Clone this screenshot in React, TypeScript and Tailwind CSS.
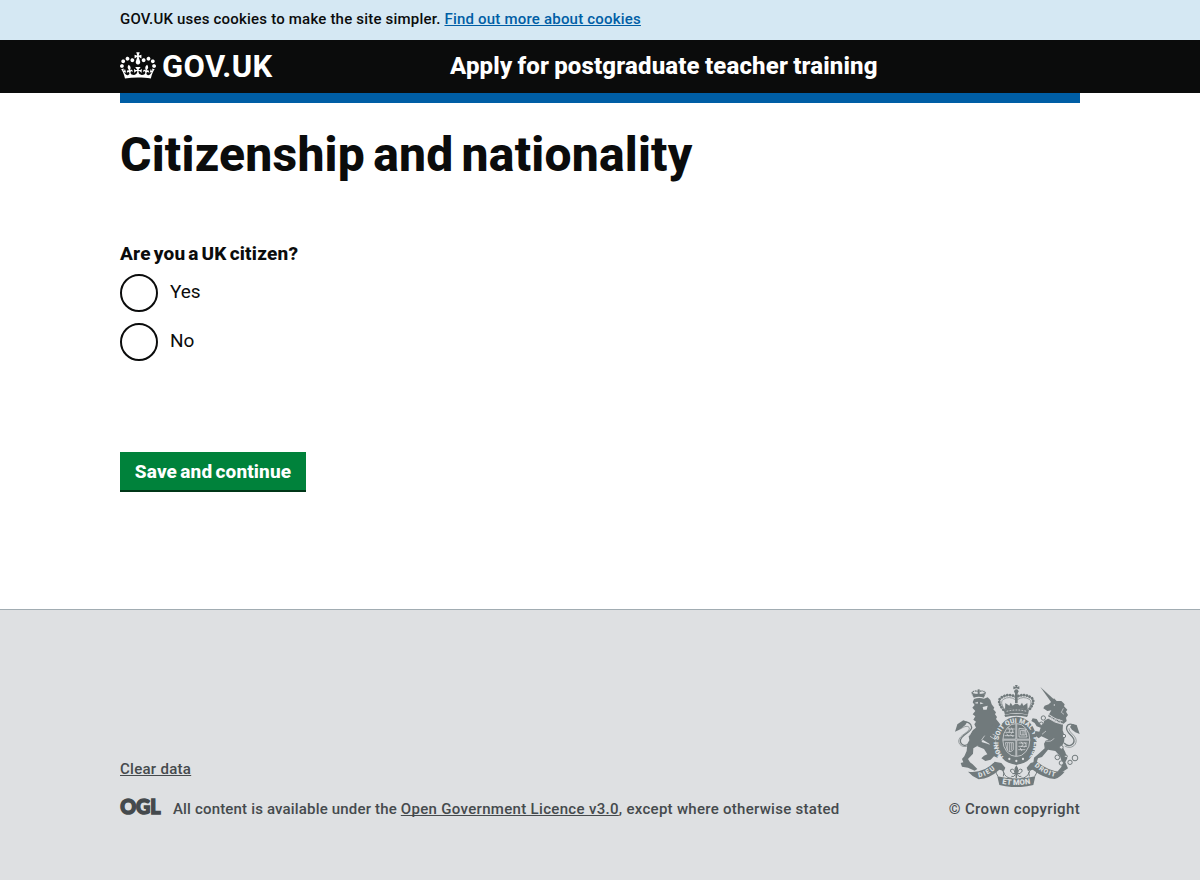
import React from 'react';

function Crown() {
  return (
    <svg viewBox="0 0 132 97" width="36" height="27" fill="currentColor" fillRule="evenodd" aria-hidden="true" className="block">
      <path d="M25 30.2c3.5 1.5 7.7-.2 9.1-3.7 1.5-3.6-.2-7.8-3.9-9.2-3.6-1.4-7.6.3-9.1 3.9-1.4 3.5.3 7.5 3.9 9zM9 39.5c3.6 1.5 7.8-.2 9.2-3.7 1.5-3.6-.2-7.8-3.9-9.1-3.6-1.5-7.6.2-9.1 3.8-1.4 3.5.3 7.5 3.8 9zM4.4 57.2c3.5 1.5 7.7-.2 9.1-3.8 1.5-3.6-.2-7.7-3.9-9.1-3.5-1.5-7.6.3-9.1 3.8-1.4 3.5.3 7.6 3.9 9.1zm38.3-21.4c3.5 1.5 7.7-.2 9.1-3.8 1.5-3.6-.2-7.7-3.9-9.1-3.6-1.5-7.6.3-9.1 3.8-1.3 3.6.4 7.7 3.9 9.1zm64.4-5.6c-3.6 1.5-7.8-.2-9.1-3.7-1.5-3.6.2-7.8 3.8-9.2 3.6-1.4 7.7.3 9.2 3.9 1.3 3.5-.4 7.5-3.9 9zm15.9 9.3c-3.6 1.5-7.7-.2-9.1-3.7-1.5-3.6.2-7.8 3.7-9.1 3.6-1.5 7.7.2 9.2 3.8 1.5 3.5-.3 7.5-3.8 9zm4.7 17.7c-3.6 1.5-7.8-.2-9.2-3.8-1.5-3.6.2-7.7 3.9-9.1 3.6-1.5 7.7.3 9.2 3.8 1.3 3.5-.4 7.6-3.9 9.1zM89.3 35.8c-3.6 1.5-7.8-.2-9.2-3.8-1.4-3.6.2-7.7 3.9-9.1 3.6-1.5 7.7.3 9.2 3.8 1.4 3.6-.3 7.7-3.9 9.1zM69.7 17.7l8.9 4.7V9.3l-8.9 2.8c-.2-.3-.5-.6-.9-.9L72.4 0H59.6l3.5 11.2c-.3.3-.6.5-.9.9l-8.8-2.8v13.1l8.8-4.7c.3.3.6.7.9.9l-5 15.4v.1c-.2.8-.4 1.6-.4 2.4 0 4.1 3.1 7.5 7 8.1h.2c.3 0 .7.1 1 .1.4 0 .7 0 1-.1h.2c4-.6 7.1-4.1 7.1-8.1 0-.8-.1-1.7-.4-2.4V34l-5.1-15.4c.4-.2.7-.6 1-.9zM66 92.8c16.9 0 32.8 1.1 47.1 3.2 4-16.9 8.9-26.7 14-33.5l-9.6-3.4c1 4.9 1.1 7.2 0 10.2-1.5-1.4-3-4.3-4.2-8.7L108.6 76c2.8-2 5-3.2 7.5-3.3-4.4 9.4-10 11.9-13.6 11.2-4.3-.8-6.3-4.6-5.6-7.9 1-4.7 5.7-5.9 8-.5 4.3-8.7-3-11.4-7.6-8.8 7.1-7.2 7.9-13.5 2.1-21.1-8 6.1-8.1 12.3-4.5 20.8-4.7-5.4-12.1-2.5-9.5 6.2 3.4-5.2 7.9-2 7.2 3.1-.6 4.3-6.4 7.8-13.5 7.2-10.3-.9-10.9-8-11.2-13.8 2.5-.5 7.1 1.8 11 7.3L80.2 60c-4.1 4.4-8 5.3-12.3 5.4 1.4-4.4 8-11.6 8-11.6H55.5s6.4 7.2 7.9 11.6c-4.2-.1-8-1-12.3-5.4l1.4 16.4c3.9-5.5 8.5-7.7 10.9-7.3-.3 5.8-.9 12.8-11.1 13.8-7.2.6-12.9-2.9-13.5-7.2-.7-5 3.8-8.3 7.1-3.1 2.7-8.7-4.6-11.6-9.4-6.2 3.7-8.5 3.6-14.7-4.6-20.8-5.8 7.6-5 13.9 2.2 21.1-4.7-2.6-11.9.1-7.7 8.8 2.3-5.5 7.1-4.2 8.1.5.7 3.3-1.3 7.1-5.7 7.9-3.5.7-9-1.8-13.5-11.2 2.5.1 4.7 1.3 7.5 3.3l-4.7-15.4c-1.2 4.4-2.7 7.2-4.3 8.7-1.1-3-.9-5.3 0-10.2l-9.5 3.4c5 6.9 9.9 16.7 14 33.5 14.8-2.1 30.8-3.2 47.7-3.2z" />
    </svg>
  );
}

function OglLogo() {
  return (
    <svg width="41" height="18" viewBox="0 0 41 18" aria-hidden="true" className="mr-3 -mt-px block overflow-visible">
      <text x="0.2" y="16.2" textLength="40.4" lengthAdjust="spacingAndGlyphs" fontFamily="Lato" fontWeight="900" fontSize="20.5" fill="#454a4d" stroke="#454a4d" strokeWidth="1.5">
        OGL
      </text>
    </svg>
  );
}

const INK = '#717a7c';
const PAPER = '#dee0e2';

function Crest() {
  return (
    <svg width="125" height="102" viewBox="45 30 375 306" aria-hidden="true" className="block">
      <defs>
        <path id="garter" d="M191 246 C169 222 170 178 194 157 C214 139 246 139 264 157 C287 178 287 224 266 248" />
        <path id="dieu" d="M116 307 Q144 303 170 278" />
        <path id="mon" d="M186 326 Q229 334 272 326" />
        <path id="droit" d="M283 273 Q312 300 350 306" />
      </defs>

      {/* lion */}
      <g fill={INK}>
        <path d="M101 68 L97 54 Q116 60 135 54 L132 68 Q116 63 101 68Z" />
        <path d="M113 43 H119 V58 H113Z" />
        <path d="M102 72 Q116 67 132 71 L143 67 L151 75 L155 88 L163 98 L160 103 L168 112 L165 118 L171 126 L168 132 L176 142 L184 152 L172 172 L166 206 L174 234 L166 240 L154 228 L148 206 L128 194 L121 208 L100 220 L99 236 L84 252 L90 262 L98 268 L112 282 L104 287 L84 278 L66 275 L62 264 L70 262 L66 252 L73 244 L80 228 L82 206 L88 196 L86 184 L98 166 L108 158 L103 148 L108 140 L100 134 L106 124 L98 118 L106 108 L97 98 L104 90 L98 82Z" />
        <path d="M142 206 L156 212 L156 226 L166 234 L178 240 L172 248 L162 244 L152 254 L136 258 L124 250 L132 242 L142 238 L132 222 L112 214 L122 200Z" />
        <path d="M180 164 L180 176 L166 178 L158 170 L150 156 L160 148Z" />
        <path d="M45 170 L52 148 L70 136 L82 140 L76 150 L66 158 L58 164Z" />
      </g>
      <path d="M100 62 Q92 50 102 49 Q110 46 115 51 M132 62 Q140 50 130 49 Q122 46 117 51" fill="none" stroke={INK} strokeWidth="4.5" strokeLinecap="round" strokeDasharray="0.1 5" />
      <path d="M70 144 C82 138 94 144 95 157 C96 172 60 180 61 198 C63 213 80 216 92 202" fill="none" stroke={INK} strokeWidth="4" />
      <path d="M61 162 C72 154 87 150 88 160 C89 172 57 180 56 198 C57 216 78 219 92 209" fill="none" stroke={INK} strokeWidth="2" />
      <g fill={PAPER}>
        <path d="M103 84 L114 80 L113 86 Z M120 82 L131 85 L121 88Z M128 96 L143 92 L140 104 L130 104Z" />
      </g>
      <path d="M158 178 L168 182 M150 184 L166 194 M124 196 L134 182 M100 160 L88 182" stroke={PAPER} strokeWidth="2.2" fill="none" />

      {/* royal crown */}
      <g fill={INK}>
        <circle cx="229" cy="49" r="6.5" />
        <path d="M225 30 H233 L231 36 L238 34 V43 L229 40 L220 43 V34 L227 36Z" />
        <path d="M191 104 Q228 92 267 104 L264 119 Q228 109 195 119Z" />
        <path d="M225 54 H233 V84 H225Z M196 84 L208 92 L212 83 L218 92 L226 86 L232 86 L240 92 L246 83 L250 92 L262 84 L263 104 Q228 94 195 104Z" />
        <path d="M193 120 Q229 112 264 120 L261 126 Q229 118 196 126Z" />
      </g>
      <path d="M190 104 Q168 76 185 67 Q206 54 228 66 Q252 54 272 67 Q289 76 268 104" fill="none" stroke={INK} strokeWidth="8.4" strokeLinecap="round" strokeDasharray="0.1 8.6" />
      <path d="M194 104 Q178 80 190 73 Q208 62 226 74 M264 104 Q280 80 268 73 Q250 62 232 74" fill="none" stroke={INK} strokeWidth="2" />
      <path d="M200 109 Q229 101 260 109" fill="none" stroke={PAPER} strokeWidth="2.5" strokeDasharray="5 4" />

      {/* garter and shield */}
      <ellipse cx="229" cy="197" rx="61" ry="72" fill={INK} />
      <ellipse cx="229" cy="195" rx="40.5" ry="49.5" fill="none" stroke={PAPER} strokeWidth="2.2" />
      <text fill={PAPER} fontFamily="Roboto" fontWeight="900" fontSize="20">
        <textPath href="#garter" textLength="272" lengthAdjust="spacing">HONI SOIT QUI MAL Y PENSE</textPath>
      </text>
      <path d="M229 147 V243 M189 194 H269" stroke={PAPER} strokeWidth="5" />
      <path d="M229 147 V243 M189 194 H269" stroke={INK} strokeWidth="1.4" />
      <g stroke={PAPER} strokeWidth="2.2" fill="none">
        <path d="M202 162 H224 M196 172 H222 M194 182 H223 M204 157 L210 164 L207 172 M214 158 L219 168 L214 176 M200 176 L206 184 M212 178 L220 186" />
        <path d="M236 204 H262 M235 214 H261 M235 224 H256 M243 200 L249 208 L244 216 M254 202 L259 210 L252 218 M240 218 L246 228" />
        <path d="M237 160 L256 162 L261 186 H237Z M242 166 H254 L256 180 H242Z M249 166 V180" />
        <path d="M196 203 H220 V224 Q210 236 201 224Z M203 204 V226 M209 204 V230 M215 204 V226" strokeWidth="2" />
      </g>
      <path d="M199 250 L211 247 L229 257 L247 247 L259 250 L250 262 L229 269 L208 262Z" fill={INK} />
      <g fill={PAPER}>
        <circle cx="208" cy="252" r="3.4" />
        <circle cx="229" cy="258" r="3.4" />
        <circle cx="249" cy="252" r="3.4" />
      </g>

      {/* unicorn */}
      <g fill={INK}>
        <path d="M301 36 L348 79 L338 88Z" />
        <path d="M342 70 L350 78 L364 78 L374 88 L372 94 L382 104 L378 110 L384 120 L378 128 L380 138 L371 146 L352 140 L324 124 L334 106 L322 108 L310 100 L314 92 L326 88 L334 80Z" />
        <path d="M326 130 L346 140 L369 148 L368 166 L374 184 L372 202 L366 212 L376 232 L382 250 L376 262 L384 280 L366 292 L352 290 L364 276 L366 262 L360 244 L346 228 L324 224 L318 232 L306 246 L294 250 L290 262 L280 264 L282 248 L296 236 L314 220 L312 206 L318 196 L326 194 L314 188 L304 184 L296 190 L284 180 L286 168 L298 170 L302 158 L290 154 L284 144 L274 138 L278 130 L290 132 L296 142 L310 146 L312 138Z" />
        <path d="M396 147 L410 150 L419 177 L406 172 L396 164 L390 156Z" />
      </g>
      <path d="M372 204 C388 220 406 208 401 191 C395 178 376 172 380 156 C384 144 398 145 408 155" fill="none" stroke={INK} strokeWidth="4" />
      <path d="M374 213 C396 226 414 206 407 190 C400 176 387 172 387 160" fill="none" stroke={INK} strokeWidth="2" />
      <path d="M327 119 Q346 134 368 138 M324 129 Q344 144 368 148" fill="none" stroke={PAPER} strokeWidth="2.5" />
      <path d="M330 132 L334 124 L340 137 L346 130 L351 142 L358 134 L363 145" fill="none" stroke={PAPER} strokeWidth="2" />
      <path d="M318 198 Q334 202 342 190 M318 168 L306 178 M370 100 L364 112 L372 118" fill="none" stroke={PAPER} strokeWidth="2" />
      <circle cx="343" cy="90" r="2.2" fill={PAPER} />
      <g fill={PAPER} stroke={INK} strokeWidth="3">
        <circle cx="310" cy="129" r="6.5" />
        <circle cx="304" cy="146" r="5" />
        <circle cx="372" cy="183" r="5" />
        <circle cx="364" cy="217" r="5.5" />
        <circle cx="352" cy="247" r="7" />
        <circle cx="364" cy="264" r="6.5" />
        <circle cx="390" cy="262" r="6.5" />
        <circle cx="405" cy="249" r="8.5" />
        <circle cx="378" cy="244" r="4" />
      </g>

      {/* scroll */}
      <g fill={INK}>
        <path d="M84 290 Q132 296 164 260 L184 264 L196 278 L192 288 L178 284 Q150 310 116 313 Q98 306 84 290Z" />
        <path d="M374 290 Q330 294 290 259 L272 264 L260 278 L264 288 L278 284 Q312 310 344 312 Q362 306 374 290Z" />
        <path d="M172 304 Q229 317 286 304 L280 330 Q229 343 178 330Z" />
      </g>
      <path d="M174 304 Q160 284 176 280 Q196 284 190 304 M284 304 Q298 284 282 280 Q262 284 268 304" fill="none" stroke={INK} strokeWidth="3" />
      <path d="M190 290 Q196 310 216 310 M268 290 Q262 310 242 310" fill="none" stroke={INK} strokeWidth="3" />
      <g fill={PAPER} fontFamily="Roboto" fontWeight="900" fontSize="20">
        <text><textPath href="#dieu" textLength="56" lengthAdjust="spacing">DIEU</textPath></text>
        <text fontSize="23"><textPath href="#mon" textLength="86" lengthAdjust="spacing">ET MON</textPath></text>
        <text><textPath href="#droit" textLength="70" lengthAdjust="spacing">DROIT</textPath></text>
      </g>

      {/* fleur-de-lis */}
      <g fill={INK}>
        <path d="M229 271 Q239 284 232 295 L231 310 H227 L226 295 Q219 284 229 271Z" />
        <rect x="217" y="294" width="24" height="3.5" />
      </g>
      <path d="M225 294 Q222 278 212 284 Q209 291 217 293 M233 294 Q236 278 246 284 Q249 291 241 293 M226 298 Q222 308 214 304 M232 298 Q236 308 244 304" fill="none" stroke={INK} strokeWidth="3" />
    </svg>
  );
}

function Radio({ label }: { label: string }) {
  return (
    <label className="flex h-[38px] items-center gap-3">
      <input type="radio" name="citizen" className="size-[38px] shrink-0 appearance-none rounded-full border-2 border-[#0b0c0c] bg-white" />
      <span className="-mt-[3px] text-[19px] leading-[25px] tracking-[-0.1px]">{label}</span>
    </label>
  );
}

const LINK = 'underline decoration-1 underline-offset-1 [text-decoration-skip-ink:none]';

export default function App() {
  return (
    <div className="flex h-[880px] flex-col overflow-hidden bg-white font-['Roboto',sans-serif] text-[15px] text-[#0b0c0c]">
      <div className="h-10 bg-[#d5e8f3]">
        <p className="mx-auto w-[960px] whitespace-pre pt-[9px] leading-5 font-medium tracking-[0.2px]">
          {'GOV.UK uses cookies to make the site simpler. '}
          <a href="#" className={`${LINK} tracking-[0.2px] text-[#005ea5]`}>Find out more about cookies</a>
        </p>
      </div>

      <header className="h-[53px] bg-[#0b0c0c] text-white">
        <div className="mx-auto flex h-full w-[960px]">
          <a href="#" className="flex w-[330px] gap-1.5 pt-3">
            <Crown />
            <span className="text-[31px] leading-[29px] font-bold tracking-[0.4px]">GOV.UK</span>
          </a>
          <a href="#" className="pt-[11px] text-2xl leading-[30px] font-extrabold tracking-[0.16px] [word-spacing:-1px]">Apply for postgraduate teacher training</a>
        </div>
      </header>

      <main className="mx-auto w-[960px] grow border-t-10 border-[#005ea5]">
        <h1 className="pt-[27px] text-5xl leading-[50px] font-extrabold tracking-[0.22px] [word-spacing:-4px]">Citizenship and nationality</h1>
        <form>
          <h2 className="mt-[61px] text-[19px] leading-[25px] font-extrabold tracking-[0.22px] [word-spacing:-2px]">Are you a UK citizen?</h2>
          <div className="mt-2 flex flex-col gap-[11px]">
            <Radio label="Yes" />
            <Radio label="No" />
          </div>
          <button type="button" className="mt-[91px] block h-10 w-[186px] border-b-2 border-[#003618] bg-[#00823b] pt-px text-[19px] leading-[37px] font-extrabold tracking-[0.12px] text-white [word-spacing:-1.5px]">
            Save and continue
          </button>
        </form>
      </main>

      <footer className="h-[271px] border-t border-[#a1acb2] bg-[#dee0e2] font-medium text-[#454a4d]">
        <div className="mx-auto flex w-[960px] justify-between pt-[75px]">
          <div className="pt-[74px]">
            <a href="#" className={`${LINK} block w-fit leading-5 tracking-[0.28px]`}>Clear data</a>
            <div className="mt-5 flex">
              <OglLogo />
              <p className="whitespace-pre leading-5 tracking-[0.17px]">
                {'All content is available under the '}
                <a href="#" className={`${LINK} tracking-[0.32px]`}>Open Government Licence v3.0</a>
                <span className="tracking-[0.28px]">, except where otherwise stated</span>
              </p>
            </div>
          </div>
          <div className="flex flex-col items-end">
            <Crest />
            <p className="mt-3 leading-5 tracking-[0.36px]">© Crown copyright</p>
          </div>
        </div>
      </footer>
    </div>
  );
}
